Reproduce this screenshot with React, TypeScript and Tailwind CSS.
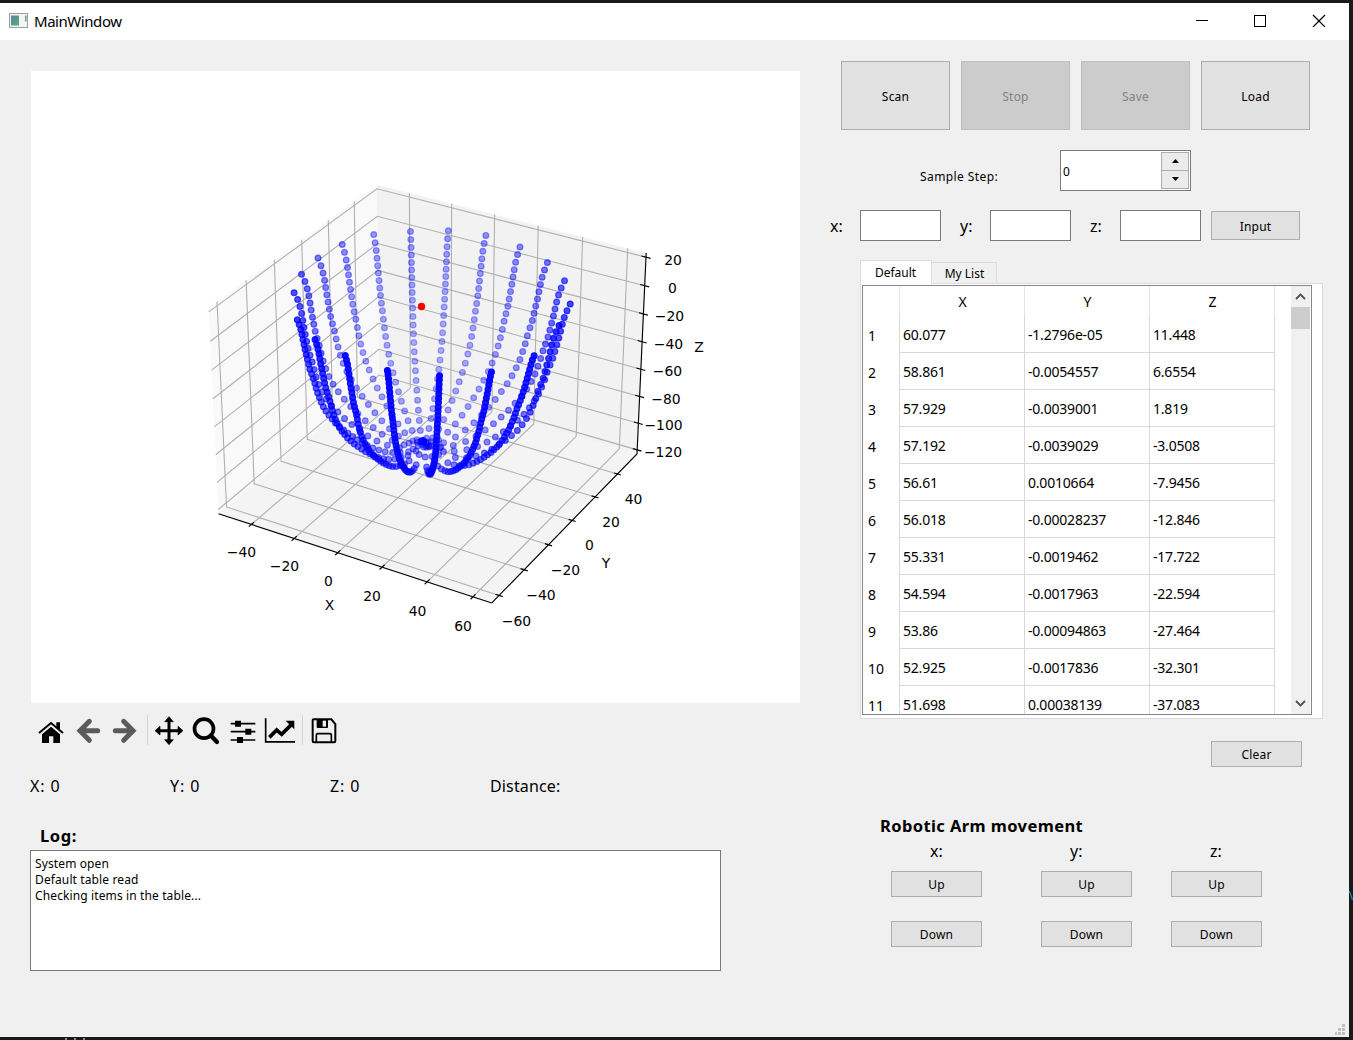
import React from "react";

/* ---------- 3D scatter plot ---------- */

type V3 = [number, number, number];

const X_LIM = [-55.6, 68.1];
const Y_LIM = [-65.7, 58.0];
const Z_LIM = [-123.1, 22.9];
const HALF_XY = 0.59525;
const HALF_Z = 0.44645;

const norm = (v: number, lim: number[], half: number) =>
  ((v - lim[0]) / (lim[1] - lim[0])) * 2 * half - half;

const toBox = (x: number, y: number, z: number): V3 => [
  norm(x, X_LIM, HALF_XY),
  norm(y, Y_LIM, HALF_XY),
  norm(z, Z_LIM, HALF_Z),
];

// Camera at azimuth -60, elevation 30, distance 10
const project = ([x, y, z]: V3) => {
  const u = 0.866 * x + 0.5 * y;
  const v = -0.25 * x + 0.433 * y + 0.866 * z;
  const d = 10 - (0.433 * x - 0.75 * y + 0.5 * z);
  return { x: 400.6 + (2630 * u) / d, y: 312.8 - (2630 * v) / d, d };
};

const linePath = (pts: V3[]) =>
  pts
    .map((p, i) => {
      const q = project(p);
      return `${i ? "L" : "M"}${q.x.toFixed(2)} ${q.y.toFixed(2)}`;
    })
    .join("");

const A = HALF_XY;
const C = HALF_Z;

const X_TICKS = [-40, -20, 0, 20, 40, 60];
const Y_TICKS = [-60, -40, -20, 0, 20, 40];
const Z_TICKS = [20, 0, -20, -40, -60, -80, -100, -120];

const gridLines: string[] = [
  ...X_TICKS.map((t) => {
    const p = norm(t, X_LIM, A);
    return linePath([[p, -A, -C], [p, A, -C], [p, A, C]]);
  }),
  ...Y_TICKS.map((t) => {
    const p = norm(t, Y_LIM, A);
    return linePath([[A, p, -C], [-A, p, -C], [-A, p, C]]);
  }),
  ...Z_TICKS.map((t) => {
    const p = norm(t, Z_LIM, C);
    return linePath([[-A, -A, p], [-A, A, p], [A, A, p]]);
  }),
];

const tickMarks: string[] = [
  ...X_TICKS.map((t) => {
    const p = norm(t, X_LIM, A);
    return linePath([[p, -A - 0.018, -C], [p, -A + 0.018, -C]]);
  }),
  ...Y_TICKS.map((t) => {
    const p = norm(t, Y_LIM, A);
    return linePath([[A - 0.015, p, -C], [A + 0.015, p, -C]]);
  }),
  ...Z_TICKS.map((t) => {
    const p = norm(t, Z_LIM, C);
    return linePath([[A - 0.019, A, p], [A + 0.019, A, p]]);
  }),
];

// Bowl radius by height, measured from the bowl axis
const PROFILE: [number, number][] = [
  [14, 56], [11.45, 55.1], [6.66, 53.9], [1.82, 52.9], [-3.05, 52.2], [-7.95, 51.6],
  [-12.85, 51.0], [-17.7, 50.3], [-22.6, 49.6], [-27.5, 48.9], [-32.3, 47.9],
  [-37.1, 46.9], [-45, 45.6], [-55, 43.4], [-62, 41.2], [-70, 38], [-78, 33.8],
  [-86, 28.9], [-92, 24.6], [-96, 21.2], [-100, 16.8], [-102.5, 12], [-103.5, 8],
];
const AXIS = [5, -4];

// Starting height of each scan line, every 18 degrees
const START_Z = [11.45, 11, 12, 11.5, 12, 13, 13, 12.4, 13, 13, 13, 13, 13, 8, 7.6, 8.5, 8, 5, 4.5, 5.5];
// Radial deviation of each scan line at the rim, fading out towards the base
const RIM_SHIFT = [0, 0, -0.8, -0.3, -0.3, -0.6, -0.8, -0.6, -0.3, -1.2, -2.4, -3.2, -3.5, -1.7, -1.5, -0.6, 2.5, 2, 3.7, 3.3];

const radiusAt = (z: number) => {
  for (let i = 1; i < PROFILE.length; i++) {
    const [z0, r0] = PROFILE[i - 1];
    const [z1, r1] = PROFILE[i];
    if (z >= z1) return r1 + ((z - z1) / (z0 - z1)) * (r0 - r1);
  }
  return 8;
};

const rayRadius = (theta: number, R: number) => {
  const b = AXIS[0] * Math.cos(theta) + AXIS[1] * Math.sin(theta);
  const c2 = AXIS[0] ** 2 + AXIS[1] ** 2;
  return b + Math.sqrt(b * b - c2 + R * R);
};

const dots = START_Z.flatMap((startZ, i) => {
  const th = (i * 18 * Math.PI) / 180;
  const out: { x: number; y: number; d: number }[] = [];
  const add = (r: number, z: number) =>
    out.push(project(toBox(r * Math.cos(th), r * Math.sin(th), z)));
  const rAt = (z: number) =>
    rayRadius(th, radiusAt(z)) + RIM_SHIFT[i] * Math.max(0, Math.min(1, (z + 60) / 70));
  let lastR = rAt(startZ);
  let lastZ = startZ;
  add(lastR, startZ);
  for (let z = startZ - 0.05; z > -103.5; z -= 0.05) {
    const r = rAt(z);
    // the near side is scanned more finely
    const step = i >= 13 ? 3.6 : z > -37 ? 4.93 : 5.5;
    if (Math.hypot(r - lastR, z - lastZ) >= step) {
      add(r, z);
      lastR = r;
      lastZ = z;
    }
  }
  for (let rr = lastR - 5.5; rr > 1; rr -= 5.5) add(rr, -98 + (rr / lastR) * (lastZ + 98));
  add(0, -98);
  return out;
}).sort((a, b) => b.d - a.d);

const dMin = Math.min(...dots.map((p) => p.d));
const dMax = Math.max(...dots.map((p) => p.d));

const LABELS: [string, number, number][] = [
  ["−40", 241.5, 552], ["−20", 284.5, 566], ["0", 328.5, 581], ["20", 372, 596], ["40", 417.5, 611], ["60", 463, 626],
  ["X", 329.5, 605],
  ["−60", 516.5, 621], ["−40", 541, 595], ["−20", 565.5, 570], ["0", 589.5, 545], ["20", 611, 522], ["40", 633.5, 499],
  ["Y", 606, 563],
  ["20", 673, 260], ["0", 672.5, 288], ["−20", 669.5, 316], ["−40", 668.5, 344], ["−60", 667.5, 371], ["−80", 666, 399],
  ["−100", 663.5, 425], ["−120", 663, 452],
  ["Z", 699, 347],
];

function ScatterPlot() {
  return (
    <svg width="769" height="632" viewBox="0 0 769 632" className="block bg-white">
      <path d={linePath([[-A, -A, -C], [-A, A, -C], [-A, A, C], [-A, -A, C]]) + "Z"} fill="#f9f9f9" />
      <path d={linePath([[-A, A, -C], [A, A, -C], [A, A, C], [-A, A, C]]) + "Z"} fill="#f2f2f2" />
      <path d={linePath([[-A, -A, -C], [A, -A, -C], [A, A, -C], [-A, A, -C]]) + "Z"} fill="#f4f4f4" />
      <g fill="none" stroke="#b0b0b0" strokeWidth="1.1">
        {gridLines.map((d, i) => <path key={i} d={d} />)}
      </g>
      <g fill="none" stroke="#000" strokeWidth="1.15">
        <path d={linePath([[-A, -A, -C], [A, -A, -C]])} />
        <path d={linePath([[A, -A, -C], [A, A, -C], [A, A, C]])} />
        {tickMarks.map((d, i) => <path key={i} d={d} />)}
      </g>
      <g fill="#0000ff" stroke="#0000ff" strokeWidth="1.2">
        {dots.map((p, i) => {
          const alpha = 1 - 0.7 * ((p.d - dMin) / (dMax - dMin));
          return <circle key={i} cx={p.x} cy={p.y} r="2.9" fillOpacity={alpha} strokeOpacity={alpha} />;
        })}
      </g>
      <circle cx="390.500" cy="235.500" r="3.700" fill="#ff0000" />
      <g fontFamily="DejaVu Sans" fontSize="13.900" textAnchor="middle">
        {LABELS.map(([t, x, y], i) => <text key={i} x={x - 31} y={y - 71 + 5}>{t}</text>)}
      </g>
    </svg>
  );
}

/* ---------- toolbar ---------- */

function ToolIcon({ x, className, children }: { x: number; className: string; children: React.ReactNode }) {
  return (
    <svg width="32" height="32" viewBox={`${x} 42 96 96`} className={`block shrink-0 ${className}`}>
      {children}
    </svg>
  );
}

function Toolbar() {
  return (
    <div className="flex h-[54px] items-center pl-[5px]">
      <ToolIcon x={45} className="">
        <path d="M57 99 93 69 129 99" fill="none" stroke="#000" strokeWidth="6" />
        <path d="M109 67h11v24l-11-9zM66 103 93 80l27 23v26h-20v-20H87v20H66z" fill="#000" />
      </ToolIcon>
      <ToolIcon x={159} className="ml-1.5 text-[#5b5b5b]">
        <path d="M208 64 180 92.500l28 28.500M182 92.500h51" fill="none" stroke="currentColor" strokeWidth="15" strokeLinecap="round" strokeLinejoin="miter" />
      </ToolIcon>
      <ToolIcon x={267} className="ml-1 text-[#5b5b5b]">
        <path d="M311 64l28 28.500-28 28.500M337 92.500h-51" fill="none" stroke="currentColor" strokeWidth="15" strokeLinecap="round" />
      </ToolIcon>
      <div className="ml-1.5 h-[30px] w-px bg-[#d5d5d5]" />
      <ToolIcon x={399} className="ml-[5px]">
        <path d="M447 62v60M417 92h60" stroke="#000" strokeWidth="9" />
        <path d="M447 50l13 15h-26zM447 134l13-15h-26zM405 92l15-13v26zM489 92l-15-13v26z" fill="#000" stroke="#000" strokeWidth="2" strokeLinejoin="round" />
      </ToolIcon>
      <ToolIcon x={510} className="ml-[5px]">
        <circle cx="552" cy="86" r="28.500" fill="none" stroke="#000" strokeWidth="11" />
        <path d="M573 107l18 19" stroke="#000" strokeWidth="13" strokeLinecap="round" />
      </ToolIcon>
      <ToolIcon x={621} className="ml-[5px]">
        <path d="M632 71h74M632 95h74M632 120h74" stroke="#000" strokeWidth="5" />
        <path d="M645 62h18v18h-18zM676 86h18v18h-18zM651 111h18v18h-18z" fill="#000" />
      </ToolIcon>
      <ToolIcon x={732} className="ml-[5px]">
        <path d="M737 55v70.500h88" fill="none" stroke="#000" strokeWidth="5" />
        <path d="M748 112l22-22 15 13 29-29" fill="none" stroke="#000" strokeWidth="11" />
        <path d="M797 62h26v26z" fill="#000" />
      </ToolIcon>
      <div className="ml-1.5 h-[30px] w-px bg-[#d5d5d5]" />
      <ToolIcon x={864} className="ml-[5px]">
        <path d="M881 58h53l12 14v51q0 4-4 4H882q-4 0-4-4V61q0-3 3-3z" fill="none" stroke="#000" strokeWidth="6" />
        <path d="M890 58h34v23q0 3-3 3h-28q-3 0-3-3z" fill="#000" />
        <path d="M908 62h10v18h-10z" fill="#efefef" />
        <path d="M889 127v-22q0-4 4-4h37q4 0 4 4v22" fill="none" stroke="#000" strokeWidth="5" />
      </ToolIcon>
    </div>
  );
}

/* ---------- widgets ---------- */

function Btn({ children, className, disabled }: { children: React.ReactNode; className: string; disabled?: boolean }) {
  return (
    <button
      disabled={disabled}
      className={`flex shrink-0 items-center justify-center border pt-0.5 text-[12px] tracking-[0.2px] ${
        disabled ? "border-[#bfbfbf] bg-[#cccccc] text-[#838383]" : "border-[#adadad] bg-[#e1e1e1] text-black"
      } ${className}`}
    >
      {children}
    </button>
  );
}

const ROWS = [
  ["60.077", "-1.2796e-05", "11.448"],
  ["58.861", "-0.0054557", "6.6554"],
  ["57.929", "-0.0039001", "1.819"],
  ["57.192", "-0.0039029", "-3.0508"],
  ["56.61", "0.0010664", "-7.9456"],
  ["56.018", "-0.00028237", "-12.846"],
  ["55.331", "-0.0019462", "-17.722"],
  ["54.594", "-0.0017963", "-22.594"],
  ["53.86", "-0.00094863", "-27.464"],
  ["52.925", "-0.0017836", "-32.301"],
  ["51.698", "0.00038139", "-37.083"],
];

function DataTable() {
  return (
    <div className="flex h-[430px] w-[450px] overflow-hidden border border-[#828790] bg-white text-[14px]">
      <div className="w-[412px] shrink-0">
        <div className="flex h-[30px]">
          <div className="w-[37px] border-r border-[#e5e5e5]" />
          {["X", "Y", "Z"].map((h) => (
            <div key={h} className="flex w-[125px] items-center justify-center border-r border-[#e5e5e5] pl-px">{h}</div>
          ))}
        </div>
        {ROWS.map((row, i) => (
          <div key={i} className="flex h-[37px]">
            <div className="flex w-[37px] items-center border-r border-[#d8d8d8] pl-[5px] pt-px">{i + 1}</div>
            {row.map((c, j) => (
              <div key={j} className="flex w-[125px] items-center border-r border-b border-[#d8d8d8] pl-[3px]">
                <span className="tracking-[-0.2px]">{c}</span>
              </div>
            ))}
          </div>
        ))}
      </div>
      <div className="ml-4 flex w-[19px] flex-col items-center bg-[#f0f0f0]">
        <svg width="19" height="21" className="block shrink-0">
          <path d="M5 13l4.500-4.500 4.500 4.500" fill="none" stroke="#505050" strokeWidth="1.800" />
        </svg>
        <div className="h-[22px] w-[19px] shrink-0 bg-[#cdcdcd]" />
        <svg width="19" height="21" className="mt-auto block shrink-0">
          <path d="M5 8l4.500 4.500 4.500-4.500" fill="none" stroke="#505050" strokeWidth="1.800" />
        </svg>
      </div>
    </div>
  );
}

function TitleBar() {
  return (
    <div className="flex h-[37px] items-center bg-white pl-[9px]">
      <svg width="19" height="16" className="mb-px block">
        <defs>
          <linearGradient id="app" x1="0" y1="0" x2="0.6" y2="1">
            <stop offset="0" stopColor="#5a82b0" />
            <stop offset="1" stopColor="#55a878" />
          </linearGradient>
        </defs>
        <rect x="0.500" y="0.500" width="18" height="14" fill="#f4f4f4" stroke="#9a9fa3" />
        <rect x="2" y="2.500" width="8" height="10" fill="url(#app)" />
        <rect x="16" y="2.500" width="1.500" height="6" fill="#5f9f95" />
      </svg>
      <span className="ml-1.5 text-[15px] tracking-[-0.45px]">MainWindow</span>
      <svg width="130" height="13" className="mb-[2px] ml-auto mr-[23px] block" shapeRendering="crispEdges" fill="none" stroke="#000">
        <path d="M0 6.500h12" />
        <rect x="58.500" y="1.500" width="11" height="11" />
        <path d="M117 1l12 12M129 1l-12 12" shapeRendering="auto" strokeWidth="1.200" />
      </svg>
    </div>
  );
}

const FIELD = "border border-[#7a7a7a] bg-white";

export default function App() {
  return (
    <div className="relative h-[1040px] w-[1353px] overflow-hidden bg-[#18191b] pt-[3px] font-['Noto_Sans','Open_Sans',sans-serif] text-black">
      <div className="flex h-[1034px] w-[1349px] flex-col bg-[#f0f0f0]">
        <TitleBar />
        <div className="flex flex-1">
          <div className="w-[799px] shrink-0 pl-[30px] pt-[31px]">
            <div className="ml-px w-[769px]"><ScatterPlot /></div>
            <Toolbar />
            <div className="mt-[17px] flex h-6 items-center text-[16px]">
              <span className="w-[140px] tracking-[0.9px]">X: 0</span>
              <span className="w-[160px] tracking-[0.9px]">Y: 0</span>
              <span className="w-[160px] tracking-[0.9px]">Z: 0</span>
              <span className="tracking-[0.15px]">Distance:</span>
            </div>
            <div className="mt-[26px] flex h-6 items-center pl-[10px] text-[16.5px] font-bold tracking-[0.6px]">Log:</div>
            <div className={`mt-[2px] h-[121px] w-[691px] pl-1 pt-[5px] text-[12px] leading-4 tracking-[0.12px] ${FIELD}`}>
              <p>System open</p>
              <p>Default table read</p>
              <p>Checking items in the table...</p>
            </div>
          </div>

          <div className="flex flex-1 flex-col pl-[30px] pt-[21px]">
            <div className="ml-3 flex gap-[11px]">
              <Btn className="h-[69px] w-[109px]">Scan</Btn>
              <Btn className="h-[69px] w-[109px]" disabled>Stop</Btn>
              <Btn className="h-[69px] w-[109px]" disabled>Save</Btn>
              <Btn className="h-[69px] w-[109px]">Load</Btn>
            </div>

            <div className="mt-5 flex h-[41px] items-center pl-[91px]">
              <span className="w-[140px] pt-3 text-[12px] tracking-[0.42px]">Sample Step:</span>
              <div className={`flex h-[41px] w-[131px] items-center justify-between pl-[2px] pr-px ${FIELD}`}>
                <span className="pt-0.5 text-[12px]">0</span>
                <div className="flex h-[37px] w-[28px] flex-col border border-[#adadad] bg-[#ebebeb]">
                  <div className="flex flex-1 items-center justify-center border-b border-[#adadad]">
                    <svg width="7" height="4"><path d="M0 4L3.500 0 7 4z" /></svg>
                  </div>
                  <div className="flex flex-1 items-center justify-center pb-px">
                    <svg width="7" height="4"><path d="M0 0L3.500 4 7 0z" /></svg>
                  </div>
                </div>
              </div>
            </div>

            <div className="mt-[19px] flex h-[31px] items-center text-[16px]">
              {["x:", "y:", "z:"].map((l) => (
                <React.Fragment key={l}>
                  <span className="w-[31px] pl-px">{l}</span>
                  <div className={`mr-[18px] h-[31px] w-[81px] ${FIELD}`} />
                </React.Fragment>
              ))}
              <Btn className="-ml-2 h-[29px] w-[89px]">Input</Btn>
            </div>

            <div className="ml-[31px] mt-[19px] flex h-[23px] items-end text-[12px]">
              <div className="relative z-10 -mb-px flex h-6 w-[72px] items-center justify-center border border-b-0 border-[#dcdcdc] bg-white pr-px">Default</div>
              <div className="flex h-[21px] w-[65px] items-center justify-center border border-b-0 border-l-0 border-[#dcdcdc] pl-px pt-0.5">My List</div>
            </div>
            <div className="ml-[31px] h-[436px] w-[463px] border border-[#dcdcdc] bg-white pl-px pt-px">
              <DataTable />
            </div>

            <Btn className="ml-[382px] mt-[22px] h-[26px] w-[91px]">Clear</Btn>

            <div className="ml-[51px] mt-[47px] flex h-6 items-center text-[16.5px] font-bold tracking-[0.4px]">Robotic Arm movement</div>
            <div className="flex h-[26px] items-center pl-[101px] text-[16px]">
              <span className="w-[140px]">x:</span>
              <span className="w-[140px]">y:</span>
              <span>z:</span>
            </div>
            <div className="mt-[7px] flex flex-col gap-6 pl-[62px]">
              {["Up", "Down"].map((l) => (
                <div key={l} className="flex">
                  <Btn className="h-[26px] w-[91px]">{l}</Btn>
                  <Btn className="ml-[59px] h-[26px] w-[91px]">{l}</Btn>
                  <Btn className="ml-[39px] h-[26px] w-[91px]">{l}</Btn>
                </div>
              ))}
            </div>
            <svg width="11" height="11" className="mb-[2px] ml-auto mr-[3px] mt-auto block shrink-0" fill="#bfbfbf">
              <path d="M7 0h3v3H7zM3 4h3v3H3zM7 4h3v3H7zM0 8h2v3H0zM3 8h3v3H3zM7 8h3v3H7z" />
            </svg>
          </div>
        </div>
      </div>
      {/* slivers of the window behind */}
      <div className="flex gap-[7px] pl-[65px] pt-px">
        <div className="size-[2px] bg-[#8a8a8a]" />
        <div className="size-[2px] bg-[#8a8a8a]" />
        <div className="size-[2px] bg-[#8a8a8a]" />
      </div>
      <svg width="4" height="9" className="absolute right-0 top-[891px]">
        <path d="M0.500 0L3.500 9" stroke="#1590a8" strokeWidth="1.300" />
      </svg>
    </div>
  );
}
